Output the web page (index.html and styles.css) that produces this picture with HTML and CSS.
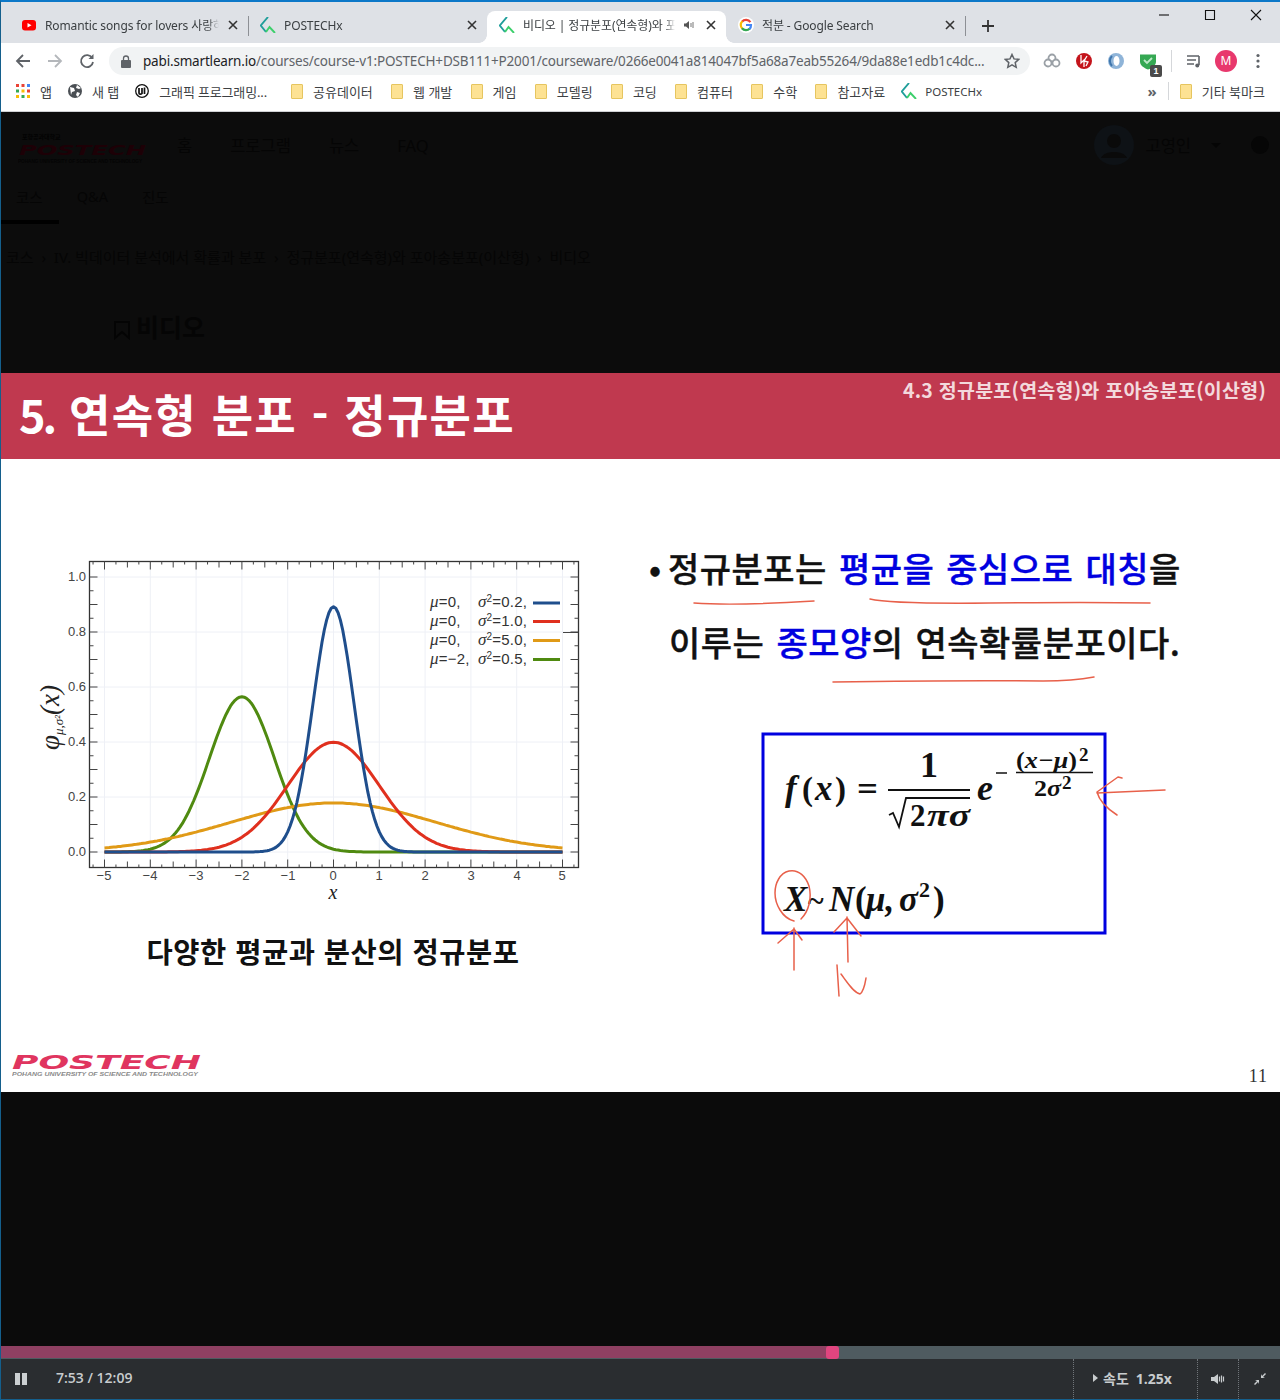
FILE: index.html
```html
<!DOCTYPE html>
<html lang="ko">
<head>
<meta charset="utf-8">
<title>비디오 | 정규분포(연속형)와 포아송분포(이산형)</title>
<link rel="stylesheet" href="styles.css">
</head>
<body>
<div class="window">
  <div class="tabstrip">
    <div class="tab">
      <svg class="favicon" viewBox="0 0 16 16"><rect x="1" y="3" width="14" height="10.5" rx="3" fill="#f00"/><path d="M6.5 6l4 2.2-4 2.2z" fill="#fff"/></svg>
      <span class="tab-title">Romantic songs for lovers 사랑하</span>
      <svg class="tab-close" viewBox="0 0 10 10"><path d="M1 1l8 8M9 1L1 9"/></svg>
    </div>
    <i class="tab-sep"></i>
    <div class="tab">
      <svg class="favicon" viewBox="0 0 16 16"><path d="M8 0L.8 8.500 6 15" fill="none" stroke="#1f9e9a" stroke-width="1.900"/><path d="M6 15l3.500-5 5.500 6" fill="none" stroke="#3ccf6b" stroke-width="1.900"/></svg>
      <span class="tab-title">POSTECHx</span>
      <svg class="tab-close" viewBox="0 0 10 10"><path d="M1 1l8 8M9 1L1 9"/></svg>
    </div>
    <div class="tab tab-active">
      <svg class="favicon" viewBox="0 0 16 16"><path d="M8 0L.8 8.500 6 15" fill="none" stroke="#1f9e9a" stroke-width="1.900"/><path d="M6 15l3.500-5 5.500 6" fill="none" stroke="#3ccf6b" stroke-width="1.900"/></svg>
      <span class="tab-title">비디오 | 정규분포(연속형)와 포아송분포(이산형)</span>
      <svg class="tab-audio" viewBox="0 0 12 12"><path d="M1 4.5h2L6 2v8L3 7.500H1z" fill="#555"/><path d="M8 4v4M10 3v6" stroke="#777" fill="none"/></svg>
      <svg class="tab-close" viewBox="0 0 10 10"><path d="M1 1l8 8M9 1L1 9"/></svg>
    </div>
    <div class="tab">
      <svg class="favicon" viewBox="0 0 16 16"><circle cx="8" cy="8" r="8" fill="#fff"/><path d="M12.400 5.200A5.200 5.200 0 0 0 4 4.700" fill="none" stroke="#ea4335" stroke-width="2.200"/><path d="M4.300 4.300a5.200 5.200 0 0 0 0 7.400" fill="none" stroke="#fbbc05" stroke-width="2.200"/><path d="M4 11.300a5.200 5.200 0 0 0 7.800.3" fill="none" stroke="#34a853" stroke-width="2.200"/><path d="M8 8h5a5.200 5.200 0 0 1-1.500 3.900" fill="none" stroke="#4285f4" stroke-width="2.200"/></svg>
      <span class="tab-title">적분 - Google Search</span>
      <svg class="tab-close" viewBox="0 0 10 10"><path d="M1 1l8 8M9 1L1 9"/></svg>
    </div>
    <i class="tab-sep"></i>
    <svg class="new-tab" viewBox="0 0 12 12"><path d="M6 0v12M0 6h12"/></svg>
    <div class="win-controls">
      <svg viewBox="0 0 12 12"><path d="M1 6h10"/></svg>
      <svg viewBox="0 0 12 12"><path d="M1.500 1.500h9v9h-9z"/></svg>
      <svg viewBox="0 0 12 12"><path d="M1 1l10 10M11 1L1 11"/></svg>
    </div>
  </div>

  <div class="toolbar">
    <div class="nav-buttons">
      <svg viewBox="0 0 16 16"><path d="M15 8H2M8 2L2 8l6 6" class="ic-dark"/></svg>
      <svg viewBox="0 0 16 16"><path d="M1 8h13M8 2l6 6-6 6" class="ic-light"/></svg>
      <svg viewBox="0 0 16 16"><path d="M13.200 5A6 6 0 1 0 14 9" class="ic-dark"/><path d="M14.500 1v5h-5z" fill="#5f6368"/></svg>
    </div>
    <div class="omnibox">
      <svg class="lock" viewBox="0 0 10 13"><path d="M2.500 5V3.500a2.500 2.500 0 0 1 5 0V5" fill="none" stroke="#5f6368" stroke-width="1.300"/><rect y="5" width="10" height="8" rx="1" fill="#5f6368"/></svg>
      <span class="url"><b>pabi.smartlearn.io</b>/courses/course-v1:POSTECH+DSB111+P2001/courseware/0266e0041a814047bf5a68a7eab55264/9da88e1edb1c4dc...</span>
      <svg class="star" viewBox="0 0 16 16"><path d="M8 1.500l2 4.400 4.700.5-3.500 3.200 1 4.700L8 11.900l-4.200 2.400 1-4.700L1.300 6.400 6 5.900z"/></svg>
    </div>
    <div class="extensions">
      <svg viewBox="0 0 18 18"><circle cx="9" cy="6" r="3.500" class="ext-ring"/><circle cx="5" cy="11" r="3.500" class="ext-ring"/><circle cx="13" cy="11" r="3.500" class="ext-ring"/></svg>
      <svg viewBox="0 0 18 18"><circle cx="9" cy="9" r="8" fill="#c4141b"/><path d="M6 3v8l3-3v7M12 4L9 9l4 1-2 4" stroke="#fff" stroke-width="1.300" fill="none"/></svg>
      <svg viewBox="0 0 18 18"><circle cx="9" cy="9" r="8" fill="#8fb4d8"/><ellipse cx="9.500" cy="9" rx="3" ry="5" fill="#fff"/><path d="M5 4a7 7 0 0 0 0 10" stroke="#3f76ad" stroke-width="2" fill="none"/></svg>
      <div class="ext-badged">
        <svg viewBox="0 0 18 18"><path d="M1 2.500h16v7c0 4-4 6.500-8 8-4-1.500-8-4-8-8z" fill="#35a853"/><path d="M5 8l3 3 5-5" stroke="#bde8c8" stroke-width="1.800" fill="none"/></svg>
        <span class="badge">1</span>
      </div>
      <i class="ext-sep"></i>
      <svg viewBox="0 0 18 18"><path d="M2 4h12M2 8h9M2 12h7M14 4v9" stroke="#5f6368" stroke-width="1.600" fill="none"/><circle cx="12.300" cy="13.500" r="2" fill="#5f6368"/></svg>
      <span class="avatar">M</span>
      <svg viewBox="0 0 18 18"><circle cx="9" cy="3.500" r="1.600" fill="#5f6368"/><circle cx="9" cy="9" r="1.600" fill="#5f6368"/><circle cx="9" cy="14.500" r="1.600" fill="#5f6368"/></svg>
    </div>
  </div>

  <div class="bookmarks">
    <div class="bm bm-tight">
      <svg class="bm-ic" viewBox="0 0 14 14"><g fill="#ea4335"><rect width="3" height="3"/><rect x="5.500" width="3" height="3"/></g><rect x="11" width="3" height="3" fill="#4285f4"/><rect y="5.500" width="3" height="3" fill="#34a853"/><rect x="5.500" y="5.500" width="3" height="3" fill="#fbbc05"/><rect x="11" y="5.500" width="3" height="3" fill="#ea4335"/><rect y="11" width="3" height="3" fill="#fbbc05"/><rect x="5.500" y="11" width="3" height="3" fill="#34a853"/><rect x="11" y="11" width="3" height="3" fill="#fbbc05"/></svg>
      <span>앱</span>
    </div>
    <div class="bm bm-tight">
      <svg class="bm-ic" viewBox="0 0 14 14"><circle cx="7" cy="7" r="7" fill="#4a4f54"/><path d="M2 3l4 1 1 3-3 1-1 3M9 1L8 4l3 1 2-1M9 8l3 1-2 4-2-2z" fill="#fff"/></svg>
      <span>새 탭</span>
    </div>
    <div class="bm bm-wide">
      <svg class="bm-ic" viewBox="0 0 14 14"><circle cx="7" cy="7" r="6.300" fill="#fff" stroke="#111" stroke-width="1.300"/><path d="M4 4v5c0 1.500 2 1.500 3 .5V4M9.500 3.500V10" stroke="#111" stroke-width="1.700" fill="none"/></svg>
      <span class="bm-long">그래픽 프로그래밍...</span>
    </div>
    <div class="bm"><i class="folder"></i><span>공유데이터</span></div>
    <div class="bm"><i class="folder"></i><span>웹 개발</span></div>
    <div class="bm"><i class="folder"></i><span>게임</span></div>
    <div class="bm"><i class="folder"></i><span>모델링</span></div>
    <div class="bm"><i class="folder"></i><span>코딩</span></div>
    <div class="bm"><i class="folder"></i><span>컴퓨터</span></div>
    <div class="bm"><i class="folder"></i><span>수학</span></div>
    <div class="bm bm-tight"><i class="folder"></i><span>참고자료</span></div>
    <div class="bm">
      <svg class="bm-ic" viewBox="0 0 16 16"><path d="M8 0L.8 8.500 6 15" fill="none" stroke="#1f9e9a" stroke-width="1.900"/><path d="M6 15l3.500-5 5.500 6" fill="none" stroke="#3ccf6b" stroke-width="1.900"/></svg>
      <span class="bm-latin">POSTECHx</span>
    </div>
    <div class="bm-end">
      <span class="chevrons">»</span>
      <i class="bm-sep"></i>
      <div class="bm"><i class="folder"></i><span>기타 북마크</span></div>
    </div>
  </div>

  <div class="page-dim">
    <div class="site-nav">
      <svg class="dim-logo" viewBox="0 0 130 42">
        <text x="4" y="15" class="dim-logo-kr">포항공과대학교</text>
        <text x="1" y="31" textLength="127" lengthAdjust="spacingAndGlyphs" class="dim-logo-main">POSTECH</text>
        <text x="0" y="39" textLength="124" lengthAdjust="spacingAndGlyphs" class="dim-logo-sub">POHANG UNIVERSITY OF SCIENCE AND TECHNOLOGY</text>
      </svg>
      <span class="n1">홈</span><span>프로그램</span><span>뉴스</span><span>FAQ</span>
      <div class="site-user">
        <svg viewBox="0 0 40 40"><circle cx="20" cy="20" r="20" fill="#0e1216"/><circle cx="20" cy="16" r="7" fill="#0a0a0a"/><path d="M7 33c3-8 23-8 26 0" fill="#0a0a0a"/></svg>
        <span>고영인</span><i class="caret"></i>
        <svg class="help" viewBox="0 0 18 18"><circle cx="9" cy="9" r="9" fill="#060606"/></svg>
      </div>
    </div>
    <div class="sub-nav">
      <span class="sn-on">코스</span><span>Q&amp;A</span><span>진도</span>
    </div>
    <div class="crumbs">코스 &nbsp;›&nbsp; IV. 빅데이터 분석에서 확률과 분포 &nbsp;›&nbsp; 정규분포(연속형)와 포아송분포(이산형) &nbsp;›&nbsp; 비디오</div>
    <div class="dim-heading">
      <svg viewBox="0 0 18 20"><path d="M2 2h14v16l-7-6-7 6z"/></svg>
      <span>비디오</span>
    </div>
  </div>

  <div class="slide">
    <div class="slide-band">
      <h1><span class="band-num">5.</span> 연속형 분포 - 정규분포</h1>
      <p>4.3 정규분포(연속형)와 포아송분포(이산형)</p>
    </div>
    <div class="slide-main">
      <div class="slide-left">
        <svg id="chart" class="chart" viewBox="30 550 560 350">
          <rect x="89.500" y="561.500" width="489" height="306" fill="#fff"/>
          <g id="grid"></g>
          <path id="c-green" class="curve" stroke="#4f8a10"/>
          <path id="c-orange" class="curve" stroke="#e09a17"/>
          <path id="c-red" class="curve" stroke="#e0301e"/>
          <path id="c-blue" class="curve" stroke="#1f4e8c"/>
          <rect x="89.500" y="561.500" width="489" height="306" fill="none" stroke="#333" stroke-width="1.300"/>
          <g id="ticks"></g>
          <g class="tick-label" text-anchor="end">
            <text x="86" y="581">1.0</text><text x="86" y="636">0.8</text><text x="86" y="691">0.6</text><text x="86" y="746">0.4</text><text x="86" y="801">0.2</text><text x="86" y="856">0.0</text>
          </g>
          <g class="tick-label" text-anchor="middle">
            <text x="104" y="880">−5</text><text x="150" y="880">−4</text><text x="196" y="880">−3</text><text x="242" y="880">−2</text><text x="288" y="880">−1</text><text x="333" y="880">0</text><text x="379" y="880">1</text><text x="425" y="880">2</text><text x="471" y="880">3</text><text x="517" y="880">4</text><text x="562" y="880">5</text>
          </g>
          <text x="333" y="899" class="axis-x" text-anchor="middle">x</text>
          <text transform="translate(59 750) rotate(-90)" class="axis-y">φ<tspan class="axis-sub" dy="4">μ,σ²</tspan><tspan dy="-4">(x)</tspan></text>
          <g class="legend">
            <text x="430" y="607"><tspan class="lg-i">μ</tspan>=0,</text><text x="478" y="607"><tspan class="lg-i">σ</tspan><tspan class="lg-s" dy="-5">2</tspan><tspan dy="5">=0.2,</tspan></text>
            <text x="430" y="626"><tspan class="lg-i">μ</tspan>=0,</text><text x="478" y="626"><tspan class="lg-i">σ</tspan><tspan class="lg-s" dy="-5">2</tspan><tspan dy="5">=1.0,</tspan></text>
            <text x="430" y="645"><tspan class="lg-i">μ</tspan>=0,</text><text x="478" y="645"><tspan class="lg-i">σ</tspan><tspan class="lg-s" dy="-5">2</tspan><tspan dy="5">=5.0,</tspan></text>
            <text x="430" y="664"><tspan class="lg-i">μ</tspan>=−2,</text><text x="478" y="664"><tspan class="lg-i">σ</tspan><tspan class="lg-s" dy="-5">2</tspan><tspan dy="5">=0.5,</tspan></text>
          </g>
          <path d="M533 603h27" class="leg" stroke="#1f4e8c"/><path d="M533 621.500h27" class="leg" stroke="#e0301e"/><path d="M533 640.500h27" class="leg" stroke="#e09a17"/><path d="M533 659.500h27" class="leg" stroke="#4f8a10"/>
          <path d="M563 632.500h15" stroke="#444" fill="none"/>
        </svg>
        <p class="caption">다양한 평균과 분산의 정규분포</p>
      </div>
      <div class="slide-right">
        <p class="lead"><span class="bullet">•</span>정규분포는 <em>평균을 중심으로 대칭</em>을</p>
        <p class="lead lead-2">이루는 <em>종모양</em>의 연속확률분포이다.</p>
        <svg class="formula" viewBox="759 730 350 210">
          <rect x="763" y="734" width="342" height="199" fill="#fff" stroke="#0000e0" stroke-width="3"/>
          <g class="math">
            <text x="785" y="800" font-size="35">f</text>
            <text x="802" y="800" font-size="33" class="upright">(</text>
            <text x="815" y="800" font-size="35">x</text>
            <text x="835" y="800" font-size="33" class="upright">)</text>
            <text x="857" y="800" font-size="33" textLength="21" lengthAdjust="spacingAndGlyphs" class="upright">=</text>
            <text x="929" y="777" font-size="36" class="upright" text-anchor="middle">1</text>
            <path d="M888 790h82" stroke="#111" stroke-width="2" fill="none"/>
            <path d="M889 815l4-2 6 14 7-29h64" stroke="#111" stroke-width="1.800" fill="none"/>
            <text x="910" y="826" font-size="31" class="upright">2</text>
            <text x="927" y="826" font-size="31" textLength="43" lengthAdjust="spacingAndGlyphs">πσ</text>
            <text x="977" y="800" font-size="36">e</text>
            <path d="M996 773h11" stroke="#111" stroke-width="1.500" fill="none"/>
            <text x="1016" y="768" font-size="23" textLength="61" lengthAdjust="spacingAndGlyphs"><tspan class="upright">(</tspan>x−μ<tspan class="upright">)</tspan></text>
            <text x="1079" y="761" font-size="19" class="upright">2</text>
            <path d="M1016 772.500h77" stroke="#111" stroke-width="1.500" fill="none"/>
            <text x="1034" y="796" font-size="23" textLength="27" lengthAdjust="spacingAndGlyphs"><tspan class="upright">2</tspan>σ</text>
            <text x="1062" y="789" font-size="19" class="upright">2</text>
            <text x="784" y="911" font-size="35">X</text>
            <text x="808" y="911" font-size="30" class="upright">~</text>
            <text x="829" y="911" font-size="35">N</text>
            <text x="855" y="911" font-size="35" class="upright">(</text>
            <text x="866" y="911" font-size="35">μ,</text>
            <text x="899" y="911" font-size="35">σ</text>
            <text x="919" y="897" font-size="22" class="upright">2</text>
            <text x="933" y="911" font-size="35" class="upright">)</text>
          </g>
        </svg>
      </div>
    </div>
    <div class="slide-foot">
      <svg class="foot-logo" viewBox="0 0 190 26">
        <text x="0" y="17" textLength="189" lengthAdjust="spacingAndGlyphs" class="foot-logo-main">POSTECH</text>
        <text x="0" y="24" textLength="186" lengthAdjust="spacingAndGlyphs" class="foot-logo-sub">POHANG UNIVERSITY OF SCIENCE AND TECHNOLOGY</text>
      </svg>
      <span class="page-no">11</span>
    </div>
    <svg class="ink" viewBox="0 0 1279 719">
      <g transform="translate(-1 -373)">
        <path d="M694 603q40 3 120-2"/>
        <path d="M870 599q20 5 120 4t160 0"/>
        <path d="M833 682q130-2 210-1 30 0 51-4"/>
        <path d="M1165 790l-68 3M1122 778l-4-1-21 15q3 12 20 23"/>
        <path d="M794 921c-12-3-19-17-19-28 0-10 5-20 14-22 10-2 17 6 20 15 3 12 0 25-8 33"/>
        <path d="M794 970v-42M778 943l16-14 8 11"/>
        <path d="M848 962l-1-45M834 932l13-14 14 18"/>
        <path d="M837 965l2 31M841 974c6 8 12 18 19 20 4-3 5-10 6-16"/>
      </g>
    </svg>
  </div>

  <div class="video-space"></div>

  <div class="progress">
    <div class="progress-done"></div>
    <i class="progress-handle"></i>
  </div>
  <div class="controls">
    <svg class="pause" viewBox="0 0 13 12"><path d="M0 0h5v12H0zM7 0h5v12H7z"/></svg>
    <span class="time">7:53 / 12:09</span>
    <div class="ctl ctl-speed"><i class="ctl-tri"></i><span class="speed-kr">속도</span><b>1.25x</b></div>
    <div class="ctl ctl-vol">
      <svg viewBox="0 0 14 12"><path d="M0 4h3l4-3v10L3 8H0z"/><path d="M8.500 3.500v5M10.500 2.500v7M12.500 3.500v5" stroke="#c8ccce" stroke-width="1.200"/></svg>
    </div>
    <div class="ctl ctl-full">
      <svg viewBox="0 0 12 12"><path d="M11 0l1 1-3 3 2 1H7V1l1 2zM1 12l-1-1 3-3-2-1h4v4l-1-2z"/></svg>
    </div>
  </div>
</div>
<script src="chart.js"></script>
</body>
</html>
```

FILE: styles.css
```css
* { box-sizing: border-box; }
html, body { margin: 0; padding: 0; background: #0c0c0c; }
body { font-family: "Noto Sans", "Noto Sans CJK KR", sans-serif; width: 1280px; height: 1400px; overflow: hidden; }
svg { display: block; flex: none; }
p, h1 { margin: 0; }
i { display: block; font-style: normal; }

.window { display: flex; flex-direction: column; width: 1280px; height: 1400px; border: 1px solid #145f8c; border-top: 2px solid #0c78c8; border-right-width: 0; }

/* tabs */
.tabstrip { display: flex; align-items: flex-end; height: 41px; background: #dee1e6; padding-left: 8px; flex: none; }
.tab { position: relative; display: flex; align-items: center; gap: 8px; width: 239px; height: 32px; padding: 0 9px 4px 12px; font-size: 12px; letter-spacing: -.12px; color: #3c4043; }
.tab-title { flex: 1; min-width: 0; white-space: nowrap; overflow: hidden; -webkit-mask-image: linear-gradient(90deg, #000 94%, transparent); mask-image: linear-gradient(90deg, #000 94%, transparent); }
.tab-active { background: #fff; border-radius: 8px 8px 0 0; color: #3c4043; }
.tab-active::before, .tab-active::after { content: ""; position: absolute; bottom: 0; width: 8px; height: 8px; }
.tab-active::before { left: -8px; background: radial-gradient(circle at 0 0, transparent 7.500px, #fff 8px); }
.tab-active::after { right: -8px; background: radial-gradient(circle at 100% 0, transparent 7.500px, #fff 8px); }
.favicon { width: 16px; height: 16px; }
.tab-close { width: 10px; height: 10px; margin: 0 1px; }
.tab-close path { stroke: #333; stroke-width: 1.600; fill: none; }
.tab-audio { width: 12px; height: 12px; margin-right: 2px; }
.tab-sep { width: 1px; height: 20px; margin: 0 -1px 7px 0; background: #8d9095; flex: none; position: relative; }
.new-tab { width: 12px; height: 12px; margin: 0 0 11px 17px; }
.new-tab path { stroke: #333; stroke-width: 1.800; fill: none; }
.win-controls { display: flex; gap: 34px; margin-left: auto; padding-right: 18px; align-self: flex-start; padding-top: 7px; }
.win-controls svg { width: 12px; height: 12px; }
.win-controls path { stroke: #111; stroke-width: 1.100; fill: none; }

/* toolbar */
.toolbar { display: flex; align-items: center; height: 38px; padding-bottom: 2px; background: #fff; flex: none; }
.nav-buttons { display: flex; gap: 16px; padding-left: 14px; width: 108px; }
.nav-buttons svg { width: 16px; height: 16px; }
.ic-dark { stroke: #5f6368; stroke-width: 1.800; fill: none; }
.ic-light { stroke: #b4b7bb; stroke-width: 1.800; fill: none; }
.omnibox { display: flex; align-items: center; width: 921px; height: 28px; border-radius: 14px; background: #f1f3f4; padding: 0 10px 0 12px; }
.lock { width: 10px; height: 13px; margin-right: 12px; }
.url { flex: 1; min-width: 0; white-space: nowrap; overflow: hidden; font-size: 13.500px; color: #5f6368; letter-spacing: -.18px; }
.url b { font-weight: 400; color: #202124; }
.star { width: 16px; height: 16px; }
.star path { fill: none; stroke: #5f6368; stroke-width: 1.500; }
.extensions { display: flex; align-items: center; gap: 14px; padding-left: 13px; }
.extensions > svg, .ext-badged svg { width: 18px; height: 18px; }
.ext-ring { fill: #fff; stroke: #9aa0a6; stroke-width: 1.800; }
.ext-badged { position: relative; }
.badge { position: absolute; right: -5px; bottom: -7px; width: 12px; height: 12px; border-radius: 2px; background: #4a4a4a; color: #fff; font: 700 9px/12px "Liberation Sans", sans-serif; text-align: center; }
.ext-sep { width: 1px; height: 22px; background: #d5d7da; margin: 0 -1px 0 0; }
.avatar { width: 22px; height: 22px; margin: 0 -2px; border-radius: 50%; background: #e8386d; color: #fff; font: 400 12px/22px "Noto Sans", sans-serif; text-align: center; }

/* bookmarks */
.bookmarks { display: flex; align-items: center; height: 31px; padding: 0 0 10px 15px; gap: 18.250px; background: #fff; border-bottom: 1px solid #cfd1d4; flex: none; color: #3c4043; }
.bm { display: flex; align-items: center; gap: 10px; white-space: nowrap; font-size: 13px; }
.bm-tight { margin-right: -2.250px; }
.bm-wide { margin-right: 5.750px; }
.bm-long { letter-spacing: -.15px; }
.bm-ic { width: 14px; height: 14px; }
.bm-latin { font-size: 11.500px; margin-left: -2px; }
.bm svg[viewBox="0 0 16 16"] { width: 16px; height: 16px; }
.folder { width: 12px; height: 15px; background: #fde293; border: 1px solid #e6c55f; border-radius: 1px; flex: none; }
.bm-end { display: flex; align-items: center; margin-left: auto; padding-right: 15px; gap: 11px; }
.chevrons { font-size: 15px; font-weight: 700; color: #5f6368; }
.bm-sep { width: 1px; height: 18px; background: #d5d7da; }

/* dimmed page */
.page-dim { height: 261px; flex: none; background: #0c0c0c; color: #050505; }
.site-nav { display: flex; align-items: center; height: 66px; font-size: 16.500px; gap: 38px; padding: 0 11px 0 17px; }
.dim-logo { width: 130px; height: 42px; margin-top: -1px; }
.dim-logo-kr { font: 700 6px "Noto Sans CJK KR", sans-serif; fill: #020202; }
.dim-logo-main { font: italic 700 14px "DejaVu Sans", sans-serif; fill: #1d0006; }
.dim-logo-sub { font: 700 5px "Liberation Sans", sans-serif; fill: #040404; }
.n1 { margin-left: -9px; }
.site-user { display: flex; align-items: center; margin-left: auto; gap: 11px; }
.site-user svg { width: 40px; height: 40px; }
.site-user svg.help { width: 18px; height: 18px; margin-left: 19px; }
.caret { width: 0; height: 0; border: 5px solid transparent; border-top-color: #050505; margin: 5px 0 0 9px; }
.sub-nav { display: flex; height: 47px; gap: 34px; padding: 8px 0 0 15px; font-size: 14.500px; position: relative; }
.sn-on::after { content: ""; position: absolute; left: 0; top: 42px; width: 58px; height: 4px; background: #000; }
.crumbs { padding: 22px 0 0 5px; font-size: 15px; line-height: 20px; white-space: nowrap; }
.dim-heading { display: flex; align-items: center; gap: 5px; padding: 43px 0 0 112px; font-size: 25px; font-weight: 700; line-height: 34px; }
.dim-heading svg { width: 18px; height: 20px; margin-top: 6px; }
.dim-heading path { fill: none; stroke: #040404; stroke-width: 2; }

/* slide */
.slide { position: relative; display: flex; flex-direction: column; height: 719px; background: #fff; flex: none; }
.slide-band { display: flex; justify-content: space-between; height: 86px; background: #c0394f; color: #fff; font-family: "Noto Sans CJK KR", sans-serif; padding: 0 14px 0 18px; flex: none; }
.slide-band h1 { font-size: 45px; font-weight: 700; line-height: 82px; letter-spacing: 1.200px; word-spacing: 1px; white-space: nowrap; }
.band-num { letter-spacing: -3px; }
.slide-band p { font-size: 19.500px; font-weight: 700; line-height: 33px; letter-spacing: .250px; color: #f3d9dd; white-space: nowrap; }
.slide-main { display: flex; flex: 1; min-height: 0; font-family: "Noto Sans CJK KR", sans-serif; color: #111; }
.slide-left { width: 639px; padding: 91px 0 0 29px; flex: none; }
.chart { width: 560px; height: 350px; }
.curve { fill: none; stroke-width: 3; stroke-linejoin: round; }
.leg { fill: none; stroke-width: 3; }
.tick-label { font: 13px "Liberation Sans", sans-serif; fill: #444; }
.axis-x { font: italic 20px "Liberation Serif", serif; fill: #222; }
.axis-y { font: italic 27px "Liberation Serif", serif; fill: #222; }
.axis-sub { font-size: 13px; }
.legend { font: 15px "Liberation Sans", sans-serif; fill: #333; letter-spacing: .200px; }
.lg-i { font: italic 17px "Liberation Serif", serif; }
.lg-s { font-size: 10px; }
.caption { width: 606px; margin: 31px 0 0; font-size: 28.500px; font-weight: 700; line-height: 40px; text-align: center; letter-spacing: .500px; }
.slide-right { padding: 72px 0 0 0; flex: 1; }
.lead { position: relative; padding-left: 28px; font-size: 34px; font-weight: 500; line-height: 74px; white-space: nowrap; letter-spacing: .500px; word-spacing: 2px; -webkit-text-stroke: .4px currentColor; }
.lead-2 { padding-left: 29px; }
.lead em { font-style: normal; color: #0000e0; }
.bullet { position: absolute; left: 9px; }
.formula { width: 350px; height: 210px; margin: 51px 0 0 119px; }
.math text { font-family: "Liberation Serif", serif; font-style: italic; font-weight: 700; fill: #111; }
.math .upright { font-style: normal; }
.slide-foot { display: flex; justify-content: space-between; align-items: flex-end; height: 48px; padding: 0 12px 5px 11px; flex: none; }
.foot-logo { width: 190px; height: 26px; margin-bottom: 9px; }
.foot-logo-main { font: italic 700 20px "DejaVu Sans", sans-serif; fill: #e0355f; }
.foot-logo-sub { font: italic 700 6px "Liberation Sans", sans-serif; fill: #8a8a8a; }
.page-no { font: 18px "Liberation Serif", serif; letter-spacing: 1px; color: #333; }
.ink { position: absolute; inset: 0; width: 1279px; height: 719px; pointer-events: none; }
.ink path { fill: none; stroke: #e8604a; stroke-width: 1.500; stroke-linecap: round; stroke-linejoin: round; }

/* player */
.video-space { height: 254px; background: #0b0b0b; flex: none; }
.progress { position: relative; height: 13px; background: #4f5b60; flex: none; }
.progress-done { width: 831px; height: 12px; background: #8f4062; }
.progress-handle { position: absolute; left: 825px; top: 0; width: 13px; height: 13px; border-radius: 3px; background: #e0457f; }
.controls { display: flex; align-items: stretch; flex: 1; background: #2a2d30; color: #c8ccce; }
.pause { width: 13px; height: 12px; margin: 14px 0 0 14px; fill: #ccd0d2; }
.time { margin: 9px 0 0 28px; font: 600 14px/20px "Open Sans", sans-serif; }
.ctl { display: flex; align-items: center; border-left: 1px dotted #70757a; height: 40px; }
.ctl-speed { margin-left: auto; width: 124px; gap: 5px; padding: 0 0 2px 19px; font: 600 14px "Open Sans", "Noto Sans CJK KR", sans-serif; }
.ctl-speed b { margin-left: 2px; font-weight: 700; }
.ctl-tri { width: 0; height: 0; border: 4px solid transparent; border-left: 5px solid #c8ccce; border-right: 0; }
.ctl-vol { width: 41px; justify-content: center; }
.ctl-vol svg { width: 14px; height: 12px; fill: #c8ccce; }
.ctl-full { width: 42px; justify-content: center; }
.ctl-full svg { width: 12px; height: 12px; fill: #c8ccce; }
```

FILE: chart.js
```js
(function () {
  var NS = "http://www.w3.org/2000/svg";
  var X0 = 333.5, XU = 45.8, Y0 = 852, YU = 275;

  function curve(id, mu, s2) {
    var d = "";
    for (var x = -5; x <= 5.001; x += 0.05) {
      var p = Math.exp(-(x - mu) * (x - mu) / (2 * s2)) / Math.sqrt(2 * Math.PI * s2);
      d += (d ? "L" : "M") + (X0 + XU * x).toFixed(1) + " " + (Y0 - YU * p).toFixed(1);
    }
    document.getElementById(id).setAttribute("d", d);
  }
  curve("c-blue", 0, 0.2);
  curve("c-red", 0, 1);
  curve("c-orange", 0, 5);
  curve("c-green", -2, 0.5);

  function line(parent, x1, y1, x2, y2, color, w) {
    var l = document.createElementNS(NS, "line");
    l.setAttribute("x1", x1); l.setAttribute("y1", y1);
    l.setAttribute("x2", x2); l.setAttribute("y2", y2);
    l.setAttribute("stroke", color); l.setAttribute("stroke-width", w);
    parent.appendChild(l);
  }

  var grid = document.getElementById("grid");
  var ticks = document.getElementById("ticks");
  var TOP = 561.5, BOT = 867.5, LEFT = 89.5, RIGHT = 578.5;

  for (var i = -22; i <= 22; i++) {
    var x = X0 + XU * i / 4;
    var h = i % 4 === 0 ? 8 : (i % 2 === 0 ? 6 : 3);
    if (i % 4 === 0 && Math.abs(i) <= 20) line(grid, x, TOP, x, BOT, "#eef0f6", 1);
    if (x > LEFT && x < RIGHT) {
      line(ticks, x, BOT, x, BOT - h, "#444", 1);
      line(ticks, x, TOP, x, TOP + h, "#444", 1);
    }
  }
  for (var j = 0; j <= 20; j++) {
    var y = Y0 - YU * j / 20, w = j % 2 === 0 ? 8 : 4;
    if (j % 4 === 0) line(grid, LEFT, y, RIGHT, y, "#eef0f6", 1);
    line(ticks, LEFT, y, LEFT + w, y, "#444", 1);
    line(ticks, RIGHT, y, RIGHT - w, y, "#444", 1);
  }
})();
```
